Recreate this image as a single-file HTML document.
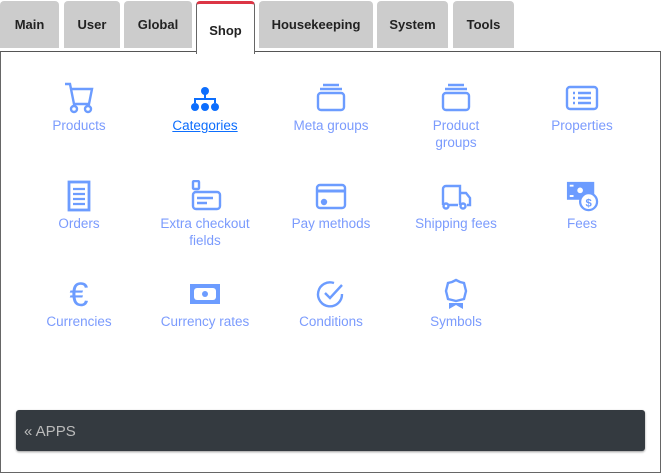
<!DOCTYPE html>
<html><head><style>
body{margin:0;width:661px;height:473px;background:#fff;font-family:"Liberation Sans",sans-serif;position:relative;overflow:hidden}
.tab{position:absolute;top:1px;height:47px;background:#ccc;border-radius:4px 4px 0 0;font-weight:bold;font-size:13px;color:#222;text-align:center;line-height:48px}
.panel{position:absolute;left:0;top:51px;width:659px;height:420px;border:1px solid #666;border-top:1px solid #555}
.shop{position:absolute;left:196px;top:1px;width:57px;height:50px;background:#fff;border:1px solid #666;border-bottom:none;border-top:3px solid #dc3545;border-radius:4px 4px 0 0;font-weight:bold;font-size:13px;color:#222;text-align:center;line-height:54px;z-index:2}
.it{position:absolute;width:120px;text-align:center;font-size:13.5px;color:#7b9bfd;line-height:17px}
.it svg{display:block;margin:0 auto 3px;}
.bar{position:absolute;left:16px;top:410px;width:629px;height:41px;background:#343a40;border-radius:3px;color:#bbb;font-size:15px;line-height:43px;padding-left:8px;box-sizing:border-box;box-shadow:0 1px 2px #999}
</style></head><body>
<div class="tab" style="left:0;width:59px">Main</div>
<div class="tab" style="left:64px;width:56px">User</div>
<div class="tab" style="left:124px;width:68px">Global</div>
<div class="tab" style="left:259px;width:114px">Housekeeping</div>
<div class="tab" style="left:377px;width:71px">System</div>
<div class="tab" style="left:453px;width:61px">Tools</div>
<div class="panel"></div>
<div class="shop">Shop</div>

<div class="it" style="left:19px;top:82px"><svg width="34" height="32" viewBox="0 0 34 32" fill="none" stroke="#6c9cff" stroke-width="2.4"><path d="M3 2h5l4 20h15l3-15H9"/><circle cx="12" cy="27" r="3"/><circle cx="26" cy="27" r="3"/></svg>Products</div>
<div class="it" style="left:145px;top:82px;color:#0d6efd;text-decoration:underline"><svg width="34" height="32" viewBox="0 0 34 32" fill="#0d6efd"><circle cx="17" cy="9" r="4"/><path d="M16 12h2v5H16zM6 16h22v2H6zM6 16h2v5H6zM26 16h2v5h-2z"/><circle cx="7" cy="25" r="4"/><circle cx="17" cy="25" r="4"/><circle cx="27" cy="25" r="4"/></svg>Categories</div>
<div class="it" style="left:271px;top:82px"><svg width="34" height="32" viewBox="0 0 34 32" fill="none" stroke="#6c9cff" stroke-width="2.4"><path d="M9 3h16M6 7h22"/><rect x="4" y="11" width="26" height="17" rx="3"/></svg>Meta groups</div>
<div class="it" style="left:396px;top:82px"><svg width="34" height="32" viewBox="0 0 34 32" fill="none" stroke="#6c9cff" stroke-width="2.4"><path d="M9 3h16M6 7h22"/><rect x="4" y="11" width="26" height="17" rx="3"/></svg>Product<br>groups</div>
<div class="it" style="left:522px;top:82px"><svg width="34" height="32" viewBox="0 0 34 32" fill="none" stroke="#6c9cff" stroke-width="2.4"><rect x="2" y="5" width="30" height="22" rx="3"/><path d="M8 11h2M13 11h13M8 16h2M13 16h13M8 21h2M13 21h13"/></svg>Properties</div>

<div class="it" style="left:19px;top:180px"><svg width="34" height="32" viewBox="0 0 34 32" fill="none" stroke="#6c9cff" stroke-width="2.8"><rect x="7" y="2" width="20" height="28"/><path d="M11 9h12M11 14h12M11 19h12M11 24h12" stroke-width="2.2"/></svg>Orders</div>
<div class="it" style="left:145px;top:180px"><svg width="34" height="32" viewBox="0 0 34 32" fill="none" stroke="#6c9cff" stroke-width="2.4"><rect x="5" y="1" width="6" height="8" rx="1"/><rect x="5" y="12" width="27" height="17" rx="3"/><path d="M9 18h16M9 23h10"/></svg>Extra checkout<br>fields</div>
<div class="it" style="left:271px;top:180px"><svg width="34" height="32" viewBox="0 0 34 32" fill="none" stroke="#6c9cff" stroke-width="2.4"><rect x="3" y="5" width="28" height="23" rx="3"/><path d="M3 11h28" stroke-width="3"/><circle cx="10" cy="22" r="2" fill="#6c9cff"/></svg>Pay methods</div>
<div class="it" style="left:396px;top:180px"><svg width="34" height="32" viewBox="0 0 34 32" fill="none" stroke="#6c9cff" stroke-width="2.4"><path d="M4 25V9a3 3 0 0 1 3-3h14v19M21 13h6l4 5v7h-3M10 25h9"/><circle cx="7" cy="26" r="2.5"/><circle cx="24" cy="26" r="2.5"/></svg>Shipping fees</div>
<div class="it" style="left:522px;top:180px"><svg width="34" height="32" viewBox="0 0 34 34" fill="#6c9cff"><rect x="1" y="2" width="29" height="19"/><circle cx="15" cy="11" r="3" fill="#fff"/><path d="M4 5h4v2H4zM4 16h4v2H4z" fill="#fff"/><circle cx="24" cy="23" r="9" fill="#fff" stroke="#6c9cff" stroke-width="2.4"/><text x="24" y="28" font-size="12" font-weight="bold" text-anchor="middle" font-family="Liberation Sans">$</text></svg>Fees</div>

<div class="it" style="left:19px;top:278px"><svg width="34" height="32" viewBox="0 0 34 32"><text x="17" y="28" font-size="34" fill="#6c9cff" text-anchor="middle" font-family="Liberation Sans">€</text></svg>Currencies</div>
<div class="it" style="left:145px;top:278px"><svg width="34" height="32" viewBox="0 0 34 32" fill="#6c9cff"><rect x="2" y="6" width="30" height="20"/><rect x="6" y="10" width="22" height="12" rx="3" fill="#fff"/><circle cx="17" cy="16" r="3"/></svg>Currency rates</div>
<div class="it" style="left:271px;top:278px"><svg width="34" height="32" viewBox="0 0 34 32" fill="none" stroke="#6c9cff" stroke-width="2.4"><path d="M28 16A12 12 0 1 1 20 5"/><path d="M11 15l5 5 12-13"/></svg>Conditions</div>
<div class="it" style="left:396px;top:278px"><svg width="34" height="32" viewBox="0 0 34 32" fill="none" stroke="#6c9cff" stroke-width="2.4"><path d="M17 2l4 2 4 1 1 4 1 4-1 4-1 4-4 1-4 1-4-1-4-1-1-4-1-4 1-4 1-4 4-1z"/><path d="M10 25v6l7-4 7 4v-6z" fill="#6c9cff" stroke="none"/></svg>Symbols</div>

<div class="bar">« APPS</div>
</body></html>
